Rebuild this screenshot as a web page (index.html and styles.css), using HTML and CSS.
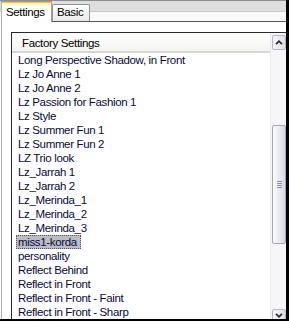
FILE: index.html
```html
<!DOCTYPE html>
<html lang="en">
<head>
  <meta charset="UTF-8"/>
  <title>Presets</title>
  <link rel="stylesheet" href="styles.css">
</head>
<body>

<div class="frame">
  <div class="tabs">
    <div class="tab tab-active">Settings</div>
    <div class="tab-slot">
      <div class="tab">Basic</div>
    </div>
    <div class="tab-fill"></div>
  </div>

  <div class="panel">
    <div class="listbox">
      <div class="list">
        <div class="list-header">Factory Settings</div>
        <div class="item"><span>Long Perspective Shadow, in Front</span></div>
        <div class="item"><span>Lz Jo Anne 1</span></div>
        <div class="item"><span>Lz Jo Anne 2</span></div>
        <div class="item"><span>Lz Passion for Fashion 1</span></div>
        <div class="item"><span>Lz Style</span></div>
        <div class="item"><span>Lz Summer Fun 1</span></div>
        <div class="item"><span>Lz Summer Fun 2</span></div>
        <div class="item"><span>LZ Trio look</span></div>
        <div class="item"><span>Lz_Jarrah 1</span></div>
        <div class="item"><span>Lz_Jarrah 2</span></div>
        <div class="item"><span>Lz_Merinda_1</span></div>
        <div class="item"><span>Lz_Merinda_2</span></div>
        <div class="item"><span>Lz_Merinda_3</span></div>
        <div class="item selected"><span>miss1-korda</span></div>
        <div class="item"><span>personality</span></div>
        <div class="item"><span>Reflect Behind</span></div>
        <div class="item"><span>Reflect in Front</span></div>
        <div class="item"><span>Reflect in Front - Faint</span></div>
        <div class="item"><span>Reflect in Front - Sharp</span></div>
      </div>

      <div class="scrollbar">
        <div class="scroll-btn scroll-up">
          <svg width="8" height="5" viewBox="0 0 8 5"><path d="M1 4.2 L4 1.2 L7 4.2" fill="none" stroke="#2a2a2a" stroke-width="1.7"/></svg>
        </div>
        <div class="thumb">
          <div class="grip"></div>
        </div>
        <div class="scroll-btn scroll-down">
          <svg width="8" height="5" viewBox="0 0 8 5"><path d="M1 0.8 L4 3.8 L7 0.8" fill="none" stroke="#2a2a2a" stroke-width="1.7"/></svg>
        </div>
      </div>
    </div>
  </div>
</div>

</body>
</html>
```

FILE: styles.css
```css
* {
  margin: 0;
  padding: 0;
  box-sizing: border-box;
}

html, body {
  width: 289px;
  height: 323px;
  background: #fff;
  overflow: hidden;
}

body {
  font-family: "Liberation Sans", Arial, sans-serif;
  font-size: 11.5px;
  letter-spacing: -0.35px;
  color: #000;
}

.frame {
  width: 289px;
  height: 321px;
  border-right: 3px solid #000;
  border-bottom: 2px solid #000;
  display: flex;
  flex-direction: column;
  overflow: hidden;
  background: #fff;
}

/* tab strip */
.tabs {
  display: flex;
  height: 22px;
  flex-shrink: 0;
  background: linear-gradient(to bottom, #8e8e8e 0, #8e8e8e 1px, #dedede 1px, #dedede 11px, #c6c6c6 11px, #c6c6c6 12px, #fafafa 12px);
}

.tab {
  height: 100%;
  padding-left: 4px;
  line-height: 15px;
  white-space: nowrap;
}

.tab-active {
  width: 51px;
  height: 21px;
  margin-top: 1px;
  margin-left: 1px;
  padding-top: 2px;
  line-height: 16px;
  background: #fff;
  border-left: 1px solid #b0b0b0;
  border-right: 1px solid #a0a0a0;
  border-top: 1px solid #e68b2c;
  box-shadow: inset 0 1px 0 #ffc73c;
}

.tab-slot {
  width: 38px;
  padding-top: 4px;
  border-bottom: 1px solid #555;
}

.tab-slot .tab {
  border: 1px solid #8f9596;
  border-bottom: none;
  border-radius: 2px 2px 0 0;
  background: linear-gradient(to bottom, #fff, #e9e9e9);
}

.tab-fill {
  flex: 1;
  border-bottom: 1px solid #555;
}

/* panel body */
.panel {
  flex: 1;
  margin-left: 1px;
  border-left: 1px solid #b0b0b0;
  padding: 10px 0 1px 9px;
  display: flex;
}

.listbox {
  flex: 1;
  display: grid;
  grid-template-columns: 1fr 16px;
  border-top: 1px solid #2a2a2a;
  border-left: 1px solid #2a2a2a;
  border-bottom: 1px solid #9a9a9a;
  overflow: hidden;
}

.list {
  overflow: hidden;
  color: #0a0a38;
}

.list-header {
  height: 20px;
  padding: 3px 0 0 10px;
  line-height: 14px;
  color: #000;
  background: linear-gradient(to bottom, #fff, #f3f3ef);
  border-bottom: 2px solid #d6d6d6;
}

.item {
  height: 14px;
  line-height: 14px;
  padding-left: 4px;
  white-space: nowrap;
}

.item span {
  display: inline-block;
  height: 14px;
  padding: 0 4px 0 2px;
}

.item.selected span {
  background: #bcbcc6;
  outline: 1px dotted #555;
  outline-offset: -1px;
}

/* scrollbar */
.scrollbar {
  display: flex;
  flex-direction: column;
  padding: 2px 0 0 1px;
  background: #f6f6f9;
  border-left: 1px solid #ececf0;
  overflow: hidden;
}

.scroll-btn {
  flex-shrink: 0;
  height: 15px;
  display: flex;
  justify-content: center;
  align-items: center;
  border: 1px solid #b6b6c4;
  border-radius: 2px;
  background: linear-gradient(to right, #f7f7fa, #dcdce6);
}

.scroll-down {
  margin-top: 65px;
  align-items: flex-start;
  padding-top: 3px;
}

.thumb {
  flex-shrink: 0;
  height: 119px;
  margin-top: 75px;
  display: flex;
  justify-content: center;
  align-items: center;
  border: 1px solid #a4a4b8;
  border-radius: 2px;
  background: linear-gradient(to right, #fdfdff, #e6e6ee 60%, #d6d6e2);
}

.grip {
  width: 5px;
  height: 7px;
  background: repeating-linear-gradient(to bottom, #8e8ea4 0, #8e8ea4 1px, transparent 1px, transparent 2px);
}
```
